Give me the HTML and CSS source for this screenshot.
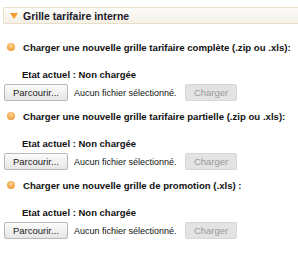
FILE: index.html
```html
<!DOCTYPE html>
<html lang="fr">
<head>
    <meta charset="UTF-8">
    <meta name="viewport" content="width=device-width, initial-scale=1.0">
    <title>Grille tarifaire interne</title>
    <link rel="stylesheet" href="styles.css">
</head>
<body>

<div class="panel">
  <div class="panel-head">
    <span class="arrow"></span>
    <h2>Grille tarifaire interne</h2>
  </div>

  <div class="upload">
    <p class="upload-title"><span class="dot"></span>Charger une nouvelle grille tarifaire complète (.zip ou .xls):</p>
    <p class="state">Etat actuel : Non chargée</p>
    <div class="file-row">
      <button class="btn">Parcourir...</button>
      <span class="file-name">Aucun fichier sélectionné.</span>
      <button class="btn btn-send" disabled>Charger</button>
    </div>
  </div>

  <div class="upload">
    <p class="upload-title"><span class="dot"></span>Charger une nouvelle grille tarifaire partielle (.zip ou .xls):</p>
    <p class="state">Etat actuel : Non chargée</p>
    <div class="file-row">
      <button class="btn">Parcourir...</button>
      <span class="file-name">Aucun fichier sélectionné.</span>
      <button class="btn btn-send" disabled>Charger</button>
    </div>
  </div>

  <div class="upload">
    <p class="upload-title"><span class="dot"></span>Charger une nouvelle grille de promotion (.xls) :</p>
    <p class="state">Etat actuel : Non chargée</p>
    <div class="file-row">
      <button class="btn">Parcourir...</button>
      <span class="file-name">Aucun fichier sélectionné.</span>
      <button class="btn btn-send" disabled>Charger</button>
    </div>
  </div>
</div>

</body>
</html>
```

FILE: styles.css
```css
body {
  margin: 0;
  background-color: #fff;
  font-family: 'Liberation Sans', Arial, sans-serif;
  color: #111;
}

.panel {
  padding: 7px 0 0 3px;
}

.panel-head {
  display: flex;
  align-items: center;
  height: 15px;
  padding-left: 6px;
  margin-bottom: 7px;
  border: 1px solid #e9dfc8;
  border-right: none;
  border-radius: 2px 0 0 2px;
  background: linear-gradient(#fdfcf9, #f4f0e6);
}

.arrow {
  width: 0;
  height: 0;
  border-left: 4px solid transparent;
  border-right: 4px solid transparent;
  border-top: 6px solid #f29a2e;
  margin-right: 5px;
}

.panel-head h2 {
  margin: 0;
  font-size: 10.5px;
  font-weight: bold;
  color: #1a1a2a;
}

.upload {
  padding-top: 10px;
}

.upload + .upload {
  padding-top: 9px;
}

.upload-title {
  display: flex;
  align-items: center;
  height: 12px;
  margin: 0;
  font-size: 9.6px;
  font-weight: bold;
  white-space: nowrap;
}

.dot {
  width: 8px;
  height: 8px;
  border-radius: 50%;
  background: radial-gradient(circle at 50% 35%, #fcd79a 0, #f2a646 60%, #e38f2c 100%);
  margin: 0 8px 0 4px;
}

.state {
  height: 12px;
  line-height: 12px;
  margin: 16px 0 3px 19px;
  font-size: 9.5px;
  font-weight: bold;
}

.file-row {
  display: flex;
  align-items: center;
}

.btn {
  font-family: 'Liberation Sans', Arial, sans-serif;
  font-size: 9.5px;
  color: #222;
  height: 17px;
  padding: 0 8px;
  margin-left: 1px;
  background: linear-gradient(#fbfbfb, #e6e6e6);
  border: 1px solid #b9b9b9;
  border-radius: 2px;
}

.file-name {
  font-size: 9px;
  margin-left: 6px;
  width: 111px;
}

.btn-send {
  width: 52px;
  margin-left: 0;
  color: #9a9a9a;
  background: #e3e3e3;
  border-color: #d6d6d6;
}
```
